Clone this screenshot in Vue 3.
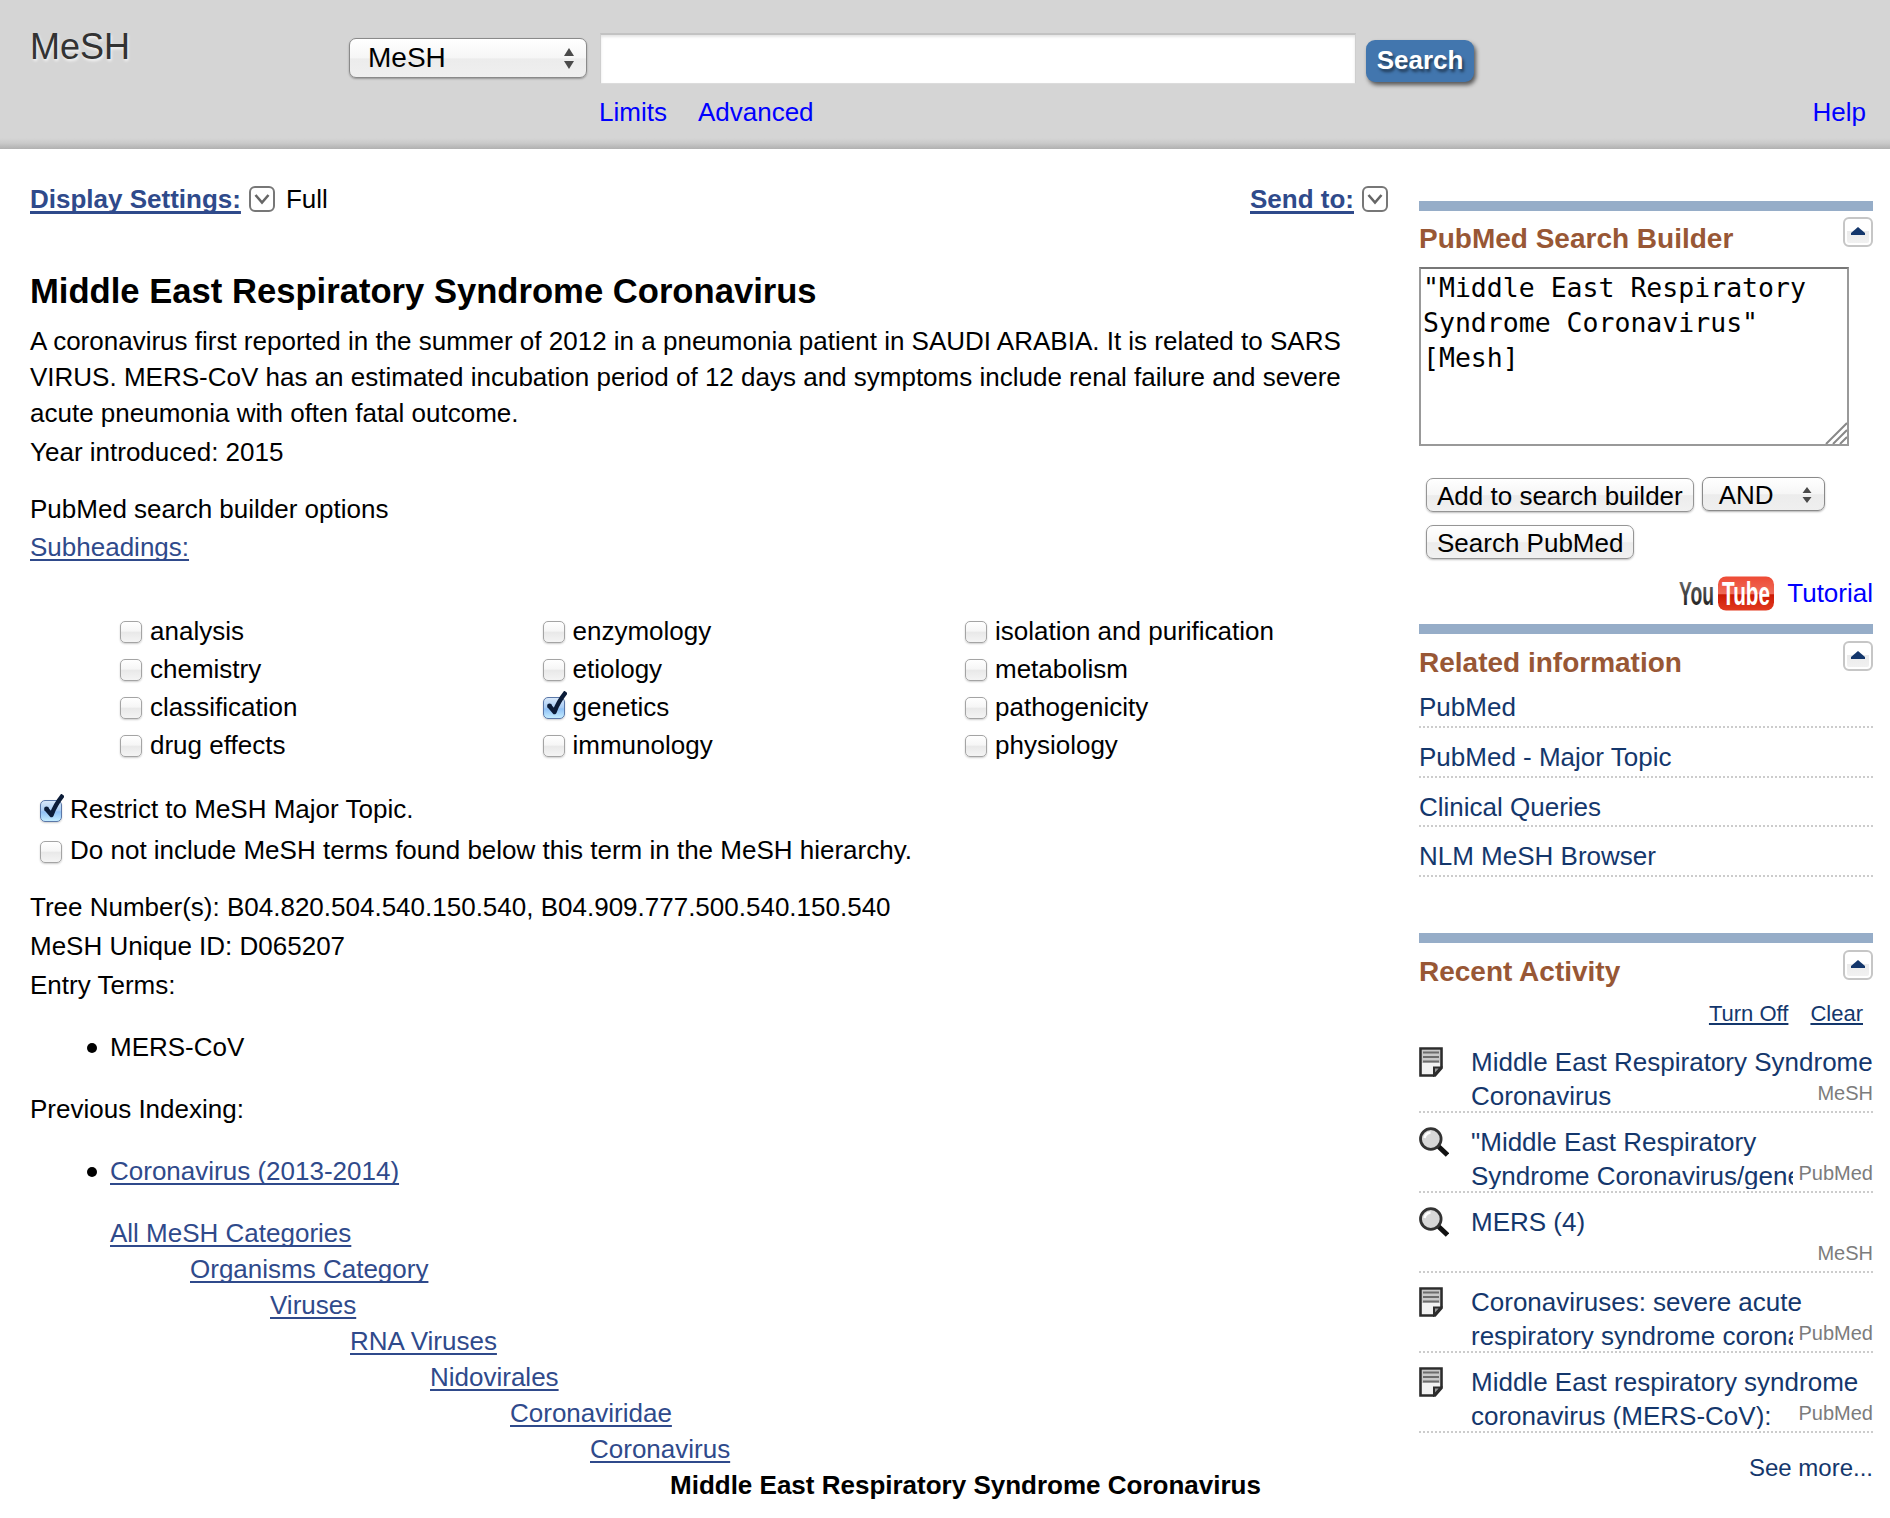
<script setup>
import { ref } from 'vue'

const subheadings = ref([
  { name: 'analysis', on: false },
  { name: 'chemistry', on: false },
  { name: 'classification', on: false },
  { name: 'drug effects', on: false },
  { name: 'enzymology', on: false },
  { name: 'etiology', on: false },
  { name: 'genetics', on: true },
  { name: 'immunology', on: false },
  { name: 'isolation and purification', on: false },
  { name: 'metabolism', on: false },
  { name: 'pathogenicity', on: false },
  { name: 'physiology', on: false },
])

const options = ref([
  { name: 'Restrict to MeSH Major Topic.', on: true },
  { name: 'Do not include MeSH terms found below this term in the MeSH hierarchy.', on: false },
])

const tree = [
  'All MeSH Categories',
  'Organisms Category',
  'Viruses',
  'RNA Viruses',
  'Nidovirales',
  'Coronaviridae',
  'Coronavirus',
]

const related = ['PubMed', 'PubMed - Major Topic', 'Clinical Queries', 'NLM MeSH Browser']

const activity = [
  { icon: 'doc', lines: ['Middle East Respiratory Syndrome', 'Coronavirus'], db: 'MeSH' },
  { icon: 'search', lines: ['"Middle East Respiratory', 'Syndrome Coronavirus/gene'], db: 'PubMed' },
  { icon: 'search', lines: ['MERS (4)'], db: 'MeSH' },
  { icon: 'doc', lines: ['Coronaviruses: severe acute', 'respiratory syndrome corona'], db: 'PubMed' },
  { icon: 'doc', lines: ['Middle East respiratory syndrome', 'coronavirus (MERS-CoV):'], db: 'PubMed' },
]

const query = ref('"Middle East Respiratory Syndrome Coronavirus" [Mesh]')
</script>

<template>
  <div class="page">
    <header class="header">
      <div class="logo">MeSH</div>
      <button class="select db-select">
        <span>MeSH</span>
        <svg width="10" height="21" viewBox="0 0 10 21"><path d="M5 0L10 8H0zM5 21L0 13H10z" fill="#4a4a4a" /></svg>
      </button>
      <div class="search">
        <div class="search-row">
          <input class="term" type="text" aria-label="Search term" />
          <button class="go">Search</button>
        </div>
        <nav class="sublinks"><a>Limits</a><a>Advanced</a></nav>
      </div>
      <a class="help">Help</a>
    </header>

    <div class="body">
      <main class="main">
        <div class="toolbar">
          <a class="menu">Display Settings:</a>
          <svg class="drop" width="26" height="26" viewBox="0 0 26 26"><rect x="1" y="1" width="24" height="24" rx="5" fill="#fff" stroke="#777" stroke-width="2" /><path d="M6.500 9l6.500 7.500L19.500 9" fill="none" stroke="#666" stroke-width="2.600" /></svg>
          <span>Full</span>
          <a class="menu send">Send to:</a>
          <svg class="drop" width="26" height="26" viewBox="0 0 26 26"><rect x="1" y="1" width="24" height="24" rx="5" fill="#fff" stroke="#777" stroke-width="2" /><path d="M6.500 9l6.500 7.500L19.500 9" fill="none" stroke="#666" stroke-width="2.600" /></svg>
        </div>

        <h1>Middle East Respiratory Syndrome Coronavirus</h1>
        <p class="desc">A coronavirus first reported in the summer of 2012 in a pneumonia patient in SAUDI ARABIA. It is related to SARS VIRUS. MERS-CoV has an estimated incubation period of 12 days and symptoms include renal failure and severe acute pneumonia with often fatal outcome.</p>
        <p class="year">Year introduced: 2015</p>
        <p class="builder-label">PubMed search builder options</p>
        <p class="sub"><a class="link">Subheadings:</a></p>

        <div class="subheadings">
          <label v-for="s in subheadings" :key="s.name" class="check">
            <span class="box" :class="{ on: s.on }">
              <input v-model="s.on" type="checkbox" />
              <svg v-if="s.on" class="tick" width="22" height="26" viewBox="0 0 22 26"><path d="M4 14.500L9.500 21Q13 11 21 1" fill="none" stroke="#0c1c38" stroke-width="4.400" stroke-linejoin="round" /><circle cx="4.500" cy="15" r="2.400" fill="#0c1c38" /></svg>
            </span>{{ s.name }}
          </label>
        </div>

        <div class="options">
          <label v-for="o in options" :key="o.name" class="check">
            <span class="box" :class="{ on: o.on }">
              <input v-model="o.on" type="checkbox" />
              <svg v-if="o.on" class="tick" width="22" height="26" viewBox="0 0 22 26"><path d="M4 14.500L9.500 21Q13 11 21 1" fill="none" stroke="#0c1c38" stroke-width="4.400" stroke-linejoin="round" /><circle cx="4.500" cy="15" r="2.400" fill="#0c1c38" /></svg>
            </span>{{ o.name }}
          </label>
        </div>

        <div class="facts">
          <p>Tree Number(s): B04.820.504.540.150.540, B04.909.777.500.540.150.540</p>
          <p>MeSH Unique ID: D065207</p>
          <p>Entry Terms:</p>
        </div>
        <ul><li>MERS-CoV</li></ul>
        <p>Previous Indexing:</p>
        <ul><li><a class="link">Coronavirus (2013-2014)</a></li></ul>

        <div class="tree">
          <div v-for="(t, i) in tree" :key="t" :style="{ paddingLeft: i * 80 + 'px' }"><a class="link">{{ t }}</a></div>
          <div :style="{ paddingLeft: tree.length * 80 + 'px' }"><b>Middle East Respiratory Syndrome Coronavirus</b></div>
        </div>
      </main>

      <aside class="side">
        <section class="portlet builder">
          <div class="head"><h3>PubMed Search Builder</h3><button class="fold"><svg width="14" height="8" viewBox="0 0 14 8"><path d="M7 0L14 6V8H0V6z" fill="#14376c" /></svg></button></div>
          <div class="area">
            <textarea v-model="query" spellcheck="false"></textarea>
            <svg class="grip" width="22" height="22" viewBox="0 0 22 22"><path d="M1 22L22 1M8 22L22 8M15 22L22 15" stroke="#888" stroke-width="2" /></svg>
          </div>
          <div class="btn-row">
            <button class="btn">Add to search builder</button>
            <button class="select op">
              <span>AND</span>
              <svg width="10" height="16" viewBox="0 0 10 16"><path d="M5 0L9.500 6H.5zM5 16L.5 10H9.500z" fill="#4a4a4a" /></svg>
            </button>
          </div>
          <button class="btn second">Search PubMed</button>
          <div class="tutorial">
            <svg width="97" height="35" viewBox="0 0 97 35" class="yt">
              <defs>
                <linearGradient id="tube" x1="0" y1="0" x2="0" y2="1">
                  <stop offset="0" stop-color="#ee4a34" /><stop offset=".5" stop-color="#ee6a58" /><stop offset=".54" stop-color="#cc1a04" /><stop offset="1" stop-color="#e23a20" />
                </linearGradient>
                <linearGradient id="you" x1="0" y1="0" x2="0" y2="1">
                  <stop offset="0" stop-color="#777" /><stop offset="1" stop-color="#111" />
                </linearGradient>
              </defs>
              <rect x="40" y="0.500" width="56" height="34" rx="8" fill="url(#tube)" />
              <text x="1" y="29" font-size="33" textLength="35" lengthAdjust="spacingAndGlyphs" fill="url(#you)" font-weight="bold">You</text>
              <text x="44" y="29" font-size="33" textLength="48" lengthAdjust="spacingAndGlyphs" fill="#fff" font-weight="bold">Tube</text>
            </svg>
            <a>Tutorial</a>
          </div>
        </section>

        <section class="portlet related">
          <div class="head"><h3>Related information</h3><button class="fold"><svg width="14" height="8" viewBox="0 0 14 8"><path d="M7 0L14 6V8H0V6z" fill="#14376c" /></svg></button></div>
          <ul><li v-for="r in related" :key="r">{{ r }}</li></ul>
        </section>

        <section class="portlet recent">
          <div class="head"><h3>Recent Activity</h3><button class="fold"><svg width="14" height="8" viewBox="0 0 14 8"><path d="M7 0L14 6V8H0V6z" fill="#14376c" /></svg></button></div>
          <div class="actions"><a>Turn Off</a><a>Clear</a></div>
          <ul>
            <li v-for="a in activity" :key="a.lines[0]">
              <svg v-if="a.icon === 'doc'" width="24" height="30" viewBox="0 0 24 30">
                <path d="M1.500 1.500H22.500V21L16 28.500H1.500z" fill="#f2f2f2" stroke="#2c2c2c" stroke-width="2.600" />
                <path d="M3 3H21V16H3z" fill="#c9c9c9" />
                <path d="M4 5.500H20M4 10H20M4 14.500H20" stroke="#6c6c6c" stroke-width="2.200" />
                <path d="M15 28V20.500H22z" fill="#999" stroke="#2c2c2c" stroke-width="2" />
              </svg>
              <svg v-else width="30" height="30" viewBox="0 0 30 30">
                <path d="M19 19L28.500 28" stroke="#111" stroke-width="5" />
                <circle cx="11.800" cy="12" r="10.300" fill="#d8d8d8" stroke="#333" stroke-width="2.800" />
                <path d="M5.500 11a7 7 0 0 1 6-5.500" fill="none" stroke="#fff" stroke-width="2.500" />
              </svg>
              <div class="entry">
                <div v-for="l in a.lines" :key="l">{{ l }}</div>
              </div>
              <span class="db">{{ a.db }}</span>
            </li>
          </ul>
          <div class="more"><a>See more...</a></div>
        </section>
      </aside>
    </div>
  </div>
</template>

<style>
body { margin: 0; background: #fff; }
</style>

<style scoped>
.page { width: 1890px; height: 1518px; overflow: hidden; font: 26px/36px "Liberation Sans", Arial, sans-serif; color: #000; background: #fff; }
.page * { box-sizing: border-box; }
p, h1, h3, ul { margin: 0; padding: 0; font-weight: normal; }
button, input, textarea { font: inherit; color: inherit; margin: 0; }
svg { display: block; flex: none; }

.header { height: 149px; display: flex; align-items: flex-start; background: linear-gradient(#d5d5d5, #d5d5d5 138px, #cacaca 143px, #b0b0b0 149px); padding-left: 30px; }
.logo { width: 319px; padding-top: 26px; font-size: 36px; line-height: 42px; color: #333; text-shadow: 1px 2px 3px rgba(255, 255, 255, .8); }
.select { display: flex; align-items: center; justify-content: space-between; border: 1px solid #8a8a8a; border-radius: 7px; background: linear-gradient(#fff, #f6f6f6 50%, #ececec 52%, #efefef); box-shadow: 0 1px 2px rgba(0, 0, 0, .3); }
.db-select { width: 238px; height: 40px; margin-top: 38px; padding: 0 12px 0 18px; font-size: 28px; line-height: 38px; }
.search { margin: 33px 0 0 13px; }
.search-row { display: flex; align-items: flex-start; }
.term { width: 756px; height: 51px; border: 1px solid #ccc; border-width: 2px 1px 1px; border-color: #c2c2c2 #cecece #dcdcdc; background: #fff; box-shadow: inset 0 2px 3px #e4e4e4; outline: 0; }
.go { width: 108px; height: 42px; margin: 7px 0 0 10px; padding: 0 0 2px; border: 0; border-radius: 9px; background: #4276ae; color: #fff; font-weight: bold; text-shadow: 2px 3px 3px rgba(0, 0, 0, .5); box-shadow: 2px 3px 4px rgba(0, 0, 0, .6); }
.sublinks { display: flex; gap: 31px; margin: 10px 0 0 -1px; color: #00f; }
.sublinks a, .tutorial a { color: #00f; }
.help { margin: 94px 24px 0 auto; color: #00f; }

.body { display: flex; }
.main { width: 1389px; padding: 32px 0 0 30px; }
.toolbar { display: flex; align-items: center; height: 36px; }
.menu { font-weight: bold; color: #2f4a8b; text-decoration: underline; text-decoration-thickness: 3px; text-underline-offset: 3px; text-decoration-skip-ink: none; }
.drop { margin: 0 11px 0 8px; }
.send { margin-left: auto; }
.send + .drop { margin-right: 1px; }
.link { color: #2f4a8b; text-decoration: underline; text-decoration-thickness: 2px; text-underline-offset: 3px; text-decoration-skip-ink: none; }
h1 { margin-top: 54px; font-size: 34.620px; line-height: 40px; font-weight: bold; }
.desc { margin-top: 12px; }
.year { margin-top: 3px; }
.builder-label { margin-top: 21px; }
.sub { margin-top: 2px; }
.subheadings { display: grid; grid-template-rows: repeat(4, 38px); grid-auto-flow: column; grid-auto-columns: 422.500px; margin: 47px 0 0 90px; line-height: 38px; }
.check { display: flex; align-items: center; white-space: nowrap; }
.box { position: relative; width: 22px; height: 22px; margin: 2px 8px 0 0; border: 1px solid #a4a4a4; border-radius: 5px; background: linear-gradient(#fff, #f6f6f6 45%, #e9e9e9 52%, #f4f4f4); box-shadow: 0 1px 2px rgba(0, 0, 0, .2); }
.box.on { border-color: #5b78a8; background: linear-gradient(#d8e8fa, #a6cbf4 50%, #8fc0f5 54%, #c4ecff); }
.box input { position: absolute; inset: 0; opacity: 0; }
.tick { position: absolute; left: 1px; top: -7px; }
.options { margin: 25px 0 0 10px; line-height: 41px; }
.facts { margin-top: 17px; line-height: 39px; }
.main ul { margin: 26px 0; padding-left: 80px; list-style: none; }
.main li { position: relative; }
.main li::before { content: ""; position: absolute; left: -23px; top: 14px; width: 10px; height: 10px; border-radius: 50%; background: #000; }
.facts + ul { margin-top: 24px; }
.tree { padding-left: 80px; }

.side { flex: none; width: 454px; margin-left: 0; padding-top: 52px; }
.main { flex: none; width: 1419px; padding-right: 30px; }
.portlet { border-top: 10px solid #96adc8; color: #14376c; }
.head { display: flex; justify-content: space-between; height: 56px; }
h3 { padding-top: 12px; font-size: 28px; line-height: 32px; font-weight: bold; color: #985735; }
.fold { width: 30px; height: 30px; margin-top: 6px; padding: 0 0 2px; display: flex; align-items: center; justify-content: center; border: 2px solid #c6c6c6; border-radius: 6px; background: linear-gradient(#fff 45%, #ebebeb 46%, #f2f2f2); box-shadow: inset 0 0 0 2px #fff; }
.related h3, .recent h3 { padding-top: 13px; }
.related .fold, .recent .fold { margin-top: 7px; }
.builder { height: 423px; color: #000; }
.area { position: relative; width: 430px; height: 179px; }
textarea { display: block; width: 430px; height: 179px; padding: 1px 2px; border: 2px solid #999; border-top-color: #777; resize: none; outline: 0; overflow: hidden; font: 26.500px/35px "DejaVu Sans Mono", monospace; }
.grip { position: absolute; right: 2px; bottom: 2px; }
.btn-row { display: flex; gap: 8px; margin: 31px 0 0 7px; }
.btn { height: 34px; padding: 1px 10px 0; line-height: 32px; border: 1px solid #959595; border-radius: 7px; background: linear-gradient(#fff, #f6f6f6 50%, #ececec 52%, #f1f1f1); box-shadow: 0 1px 2px rgba(0, 0, 0, .25); }
.op { width: 123px; height: 34px; padding: 1px 12px 0 16px; line-height: 32px; }
.btn-row .btn { margin-top: 1px; }
.second { display: block; margin: 13px 0 0 7px; }
.tutorial { display: flex; justify-content: flex-end; align-items: center; gap: 12px; margin-top: 16px; height: 36px; }
.yt { font-family: "Liberation Sans Narrow", "Liberation Sans", sans-serif; }
.related { height: 309px; }
.head + ul li, .recent li { list-style: none; border-bottom: 2px dotted #ccc; }
.related .head { height: 54px; }
.related li { height: 49.670px; line-height: 36px; padding-top: 11px; }
.related li:first-child { height: 40px; padding-top: 1px; }
.actions { display: flex; justify-content: flex-end; gap: 22px; padding-right: 10px; font-size: 22px; line-height: 30px; }
.recent .head { height: 56px; }
.actions a { text-decoration: underline; text-decoration-thickness: 2px; text-underline-offset: 2px; }
.recent ul { margin-top: 4px; }
.recent li { position: relative; display: flex; height: 80px; padding-top: 14px; }
.entry { margin: -2px 0 0 auto; width: 402px; height: 64px; overflow: hidden; line-height: 34px; white-space: nowrap; }
.entry div + div { width: 322px; overflow: hidden; }
.db { position: absolute; right: 0; bottom: 3px; font-size: 20px; line-height: 30px; color: #7c7c7c; }
.more { text-align: right; font-size: 24px; margin-top: 17px; line-height: 36px; }
</style>
